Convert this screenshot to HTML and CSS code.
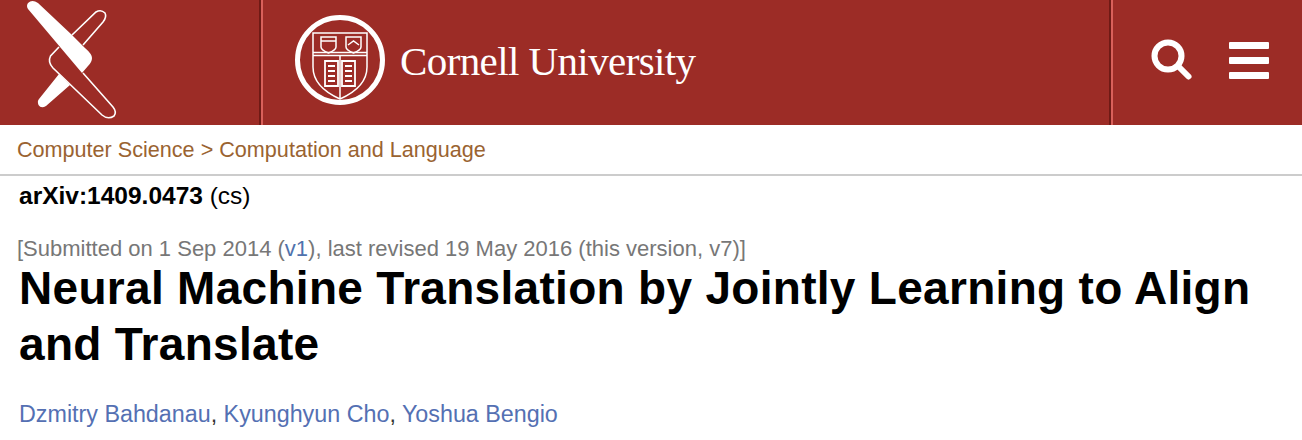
FILE: index.html
```html
<!DOCTYPE html>
<html lang="en">
<head>
<meta charset="utf-8">
<title>Neural Machine Translation</title>
<link rel="stylesheet" href="styles.css">
</head>
<body>
<header class="banner">
  <a class="brand-arxiv" href="#">
    <svg width="130" height="125" viewBox="0 0 130 125">
      <path class="hollow" d="M72 35 L96 12 Q101 9 105 13 Q107 17 103 22 L83 45"/>
      <path class="hollow" d="M59 47 L50.500 56 Q47.500 62 53 68 L102 115 Q108 120 114 116 Q117 112 113 107 L83 73"/>
      <path class="solid" d="M28 3 Q32 -1 38 3 L72 35 L85 48 Q92 54 92 58 Q92 62 88 66 L82 73 L28 9 Q26 6 28 3Z"/>
      <path class="solid" d="M59 74 L70 85 L46 106 Q41 109 38.500 105 Q37 101 39 99Z"/>
    </svg>
  </a>
  <div class="brand-cornell">
    <svg width="90" height="90" viewBox="0 0 90 90" class="seal">
      <circle class="ring" cx="45" cy="45" r="42.500"/>
      <path class="line" d="M18 18 H72 V52 Q72 72 45 84 Q18 72 18 52 Z M18 37.500 H72 M18 40.500 H72 M45 40.500 V84"/>
      <path class="line" d="M26 22 H41 V32 Q41 35 33.500 38 Q26 35 26 32 Z M26 26 H41"/>
      <path class="line" d="M51 22 H66 V32 Q66 35 58.500 38 Q51 35 51 32 Z M53 30 L58.500 26 L64 30"/>
      <path class="book" d="M30 46 H43 V71 H30 Z M47 46 H60 V71 H47 Z M33 51 H40 M33 56 H40 M33 61 H40 M33 66 H40 M50 51 H57 M50 56 H57 M50 61 H57 M50 66 H57"/>
    </svg>
    <span class="wordmark">Cornell University</span>
  </div>
  <nav class="tools">
    <svg width="42" height="42" viewBox="0 0 42 42">
      <circle class="glass" cx="17" cy="17" r="13.500"/>
      <path class="handle" d="M28 28 L37.500 37.500"/>
    </svg>
    <div class="burger"><span></span><span></span><span></span></div>
  </nav>
</header>
<div class="crumbs"><a href="#">Computer Science</a> <span>&gt;</span> <a href="#">Computation and Language</a></div>
<main class="paper">
  <div class="paper-id"><b>arXiv:1409.0473</b> (cs)</div>
  <div class="dateline">[Submitted on 1 Sep 2014 (<a href="#">v1</a>), last revised 19 May 2016 (this version, v7)]</div>
  <h1>Neural Machine Translation by Jointly Learning to Align and Translate</h1>
  <div class="authors"><a href="#">Dzmitry Bahdanau</a>, <a href="#">Kyunghyun Cho</a>, <a href="#">Yoshua Bengio</a></div>
</main>
</body>
</html>
```
FILE: styles.css
```css
* { box-sizing: border-box; }
html, body { margin: 0; padding: 0; background: #fff; overflow: hidden; }
body { font-family: "Liberation Sans", Arial, sans-serif; color: #000; }
a { text-decoration: none; }
.banner { display: flex; height: 125px; background: #9c2c26; }
.brand-arxiv { display: block; width: 263px; flex: none; border-right: 2px solid #d9605a; box-shadow: inset -2px 0 0 #6f1a15; }
.brand-cornell { flex: 1; display: flex; align-items: center; padding-left: 32px; border-right: 2px solid #d9605a; box-shadow: inset -2px 0 0 #6f1a15; gap: 15px; }
.seal { flex: none; margin-top: -5px; }
.wordmark { font-family: "Liberation Serif", serif; font-size: 41px; letter-spacing: -0.6px; color: #fff; margin-top: -3px; }
.tools { width: 189px; flex: none; display: flex; align-items: center; padding-left: 38px; gap: 36px; }
.tools svg { margin-top: -5px; }
.ring { fill: none; stroke: #fff; stroke-width: 5; }
.line { fill: none; stroke: #fff; stroke-width: 1.5; }
.book { fill: none; stroke: #fff; stroke-width: 1.8; }
.solid { fill: #fff; }
.hollow { fill: none; stroke: #fff; stroke-width: 1.6; }
.glass { fill: none; stroke: #fff; stroke-width: 6; }
.handle { fill: none; stroke: #fff; stroke-width: 6; stroke-linecap: round; }
.burger { display: flex; flex-direction: column; gap: 8px; width: 40px; margin-top: -5px; }
.burger span { height: 7px; background: #fff; border-radius: 1px; }
.crumbs { height: 51px; padding: 13px 0 0 17px; font-size: 21.6px; line-height: 24px; color: #9a6331; border-bottom: 2px solid #ccc; }
.crumbs a { color: #9a6331; }
.paper { padding: 0 19px; }
.paper-id { font-size: 24.5px; line-height: 28px; margin-top: 6px; }
.dateline { font-size: 22px; line-height: 24px; color: #777; margin: 27px 0 0 -2px; }
.dateline a { color: #4f72ad; }
h1 { font-size: 46px; line-height: 56px; font-weight: bold; margin: -1px 0 0; letter-spacing: 0.3px; }
.authors { font-size: 23.3px; line-height: 26px; color: #333; margin-top: 29px; }
.authors a { color: #5470b3; }
```
